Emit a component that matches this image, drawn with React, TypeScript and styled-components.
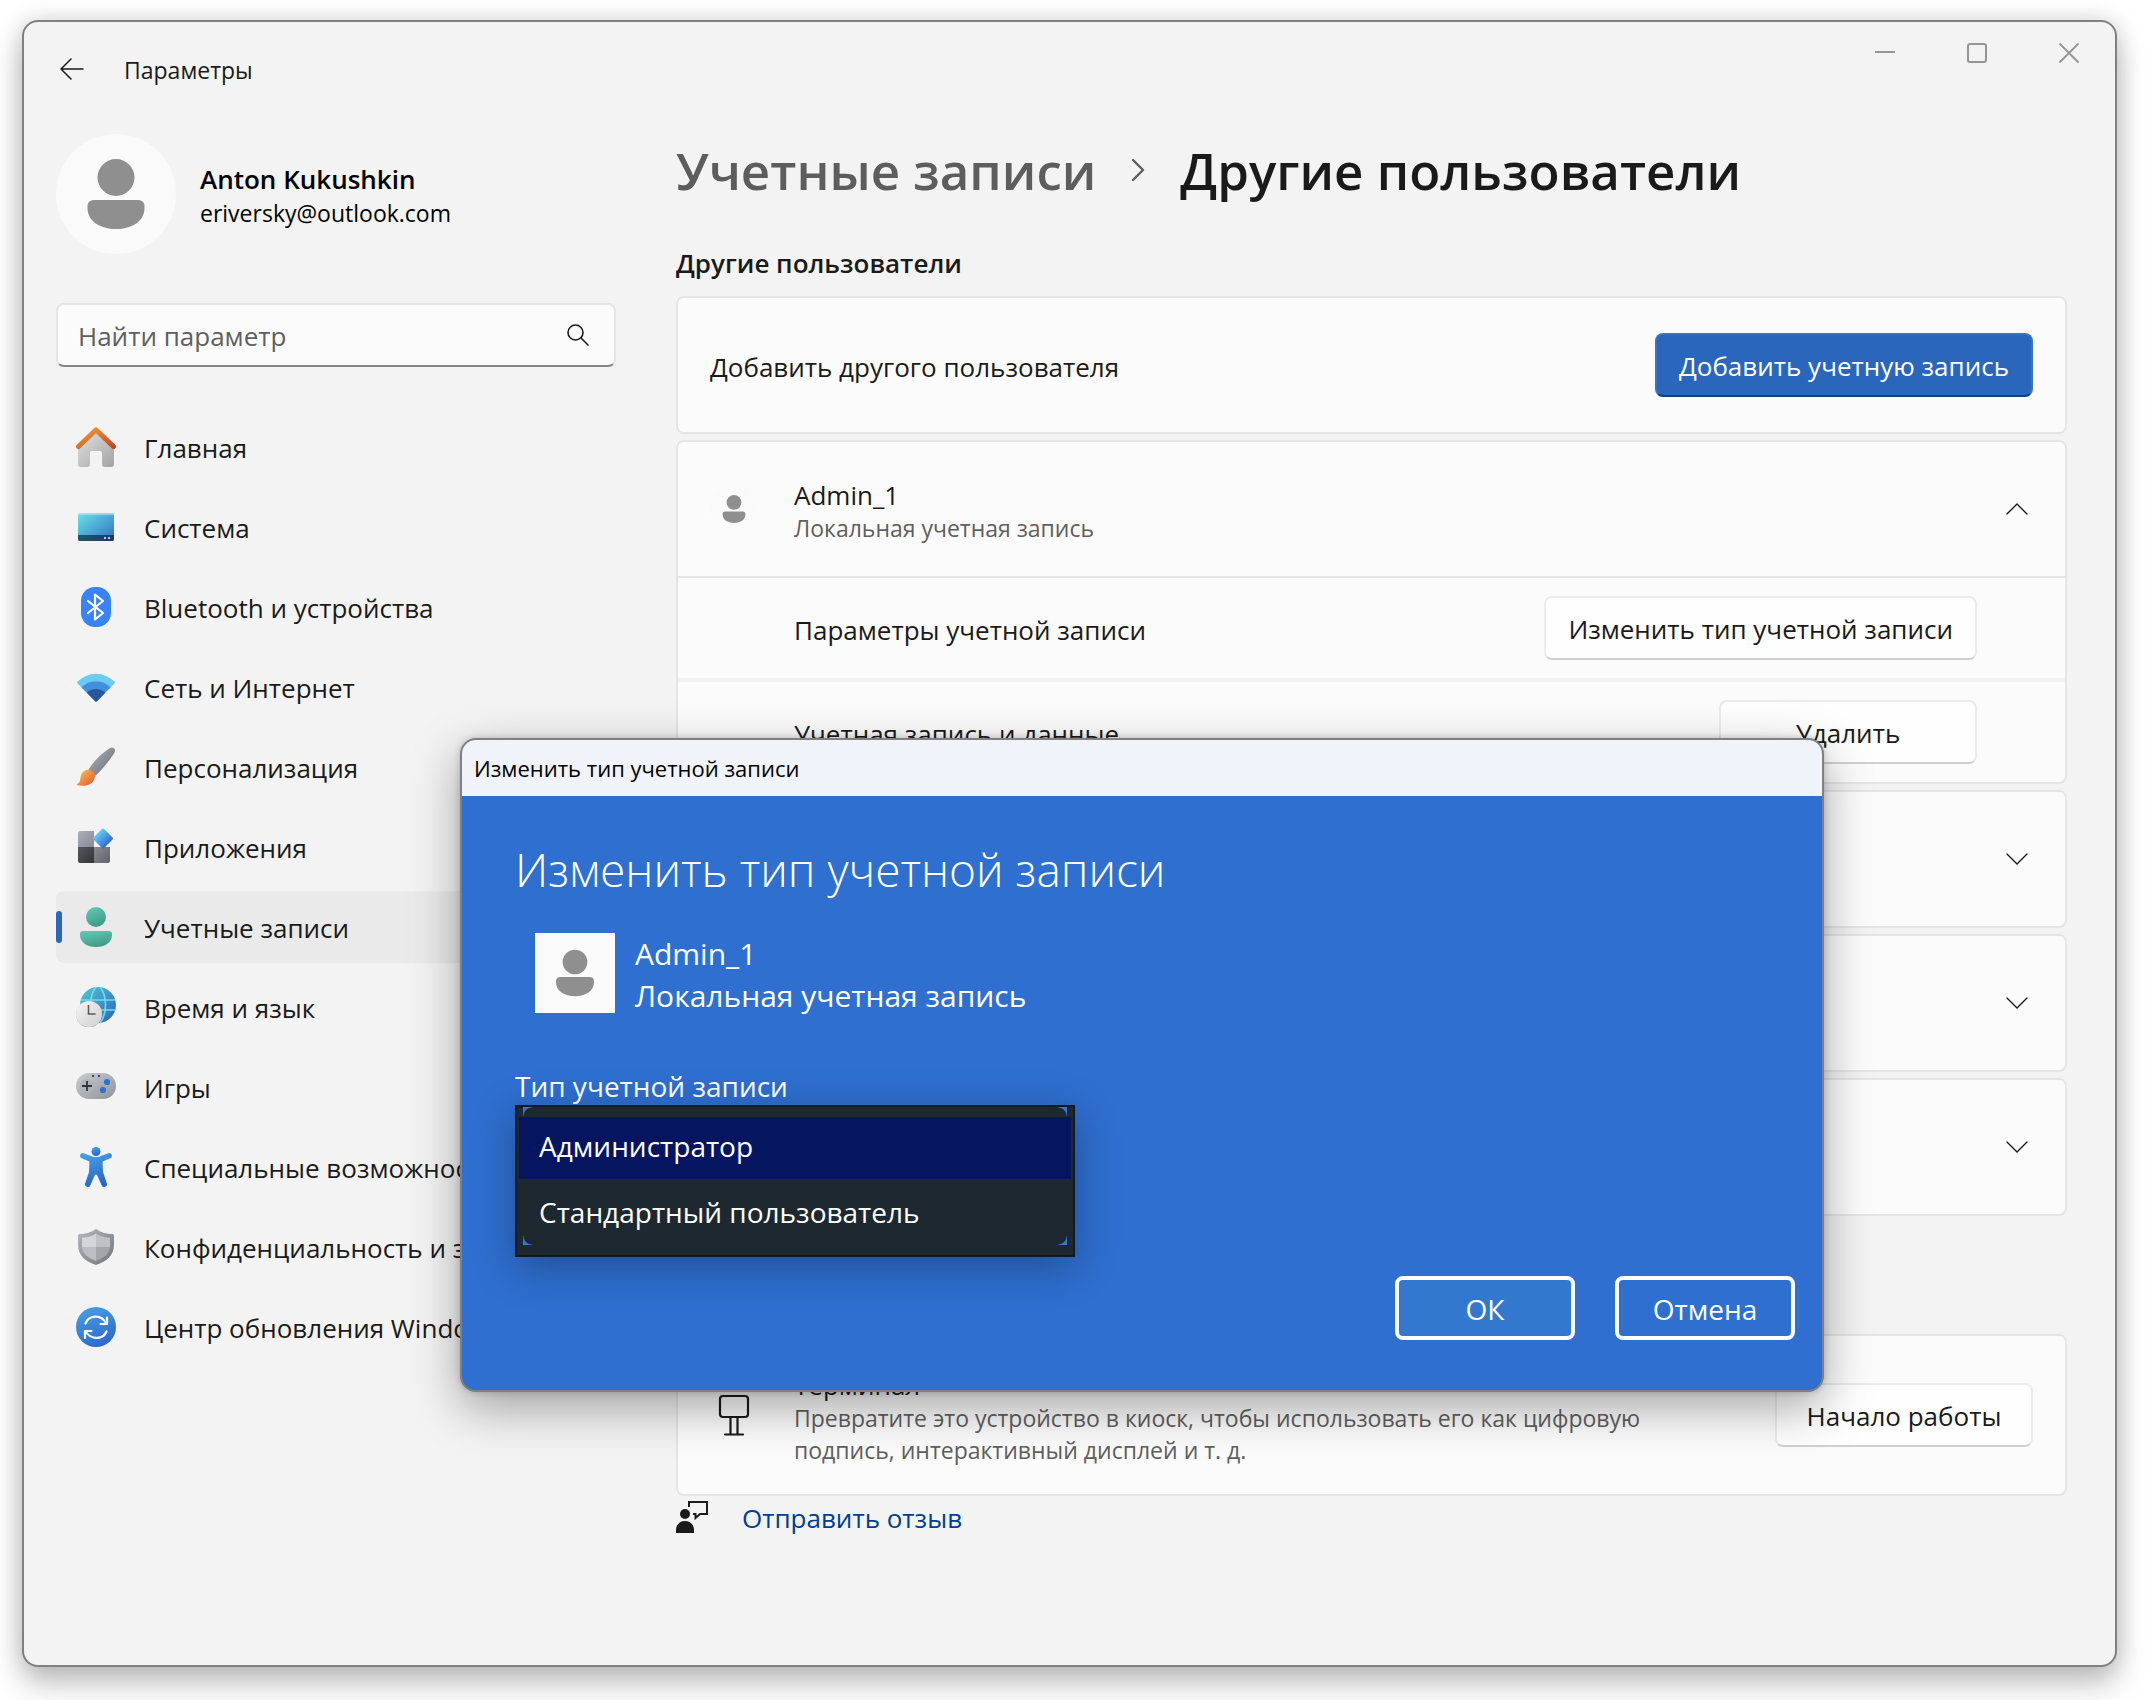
import React from "react";
import styled, { createGlobalStyle } from "styled-components";

const GlobalStyle = createGlobalStyle`
  *, *::before, *::after { box-sizing: border-box; }
  body {
    margin: 0;
    background: #fff;
    color: #1a1a1a;
    font-family: "Open Sans", "Noto Sans", sans-serif;
    font-size: 26px;
  }
  button, input, select { font: inherit; color: inherit; margin: 0; }
  h1, h2, h3, p { margin: 0; }
  svg { display: block; flex: none; }
`;

/* ---------- Window shell ---------- */

const Desktop = styled.div`
  display: flex;
  min-height: 100vh;
  padding: 20px 35px 33px 22px;
`;

const SettingsWindow = styled.div`
  position: relative;
  flex: 1;
  min-width: 0;
  display: flex;
  flex-direction: column;
  background: #f3f3f3;
  border: 2px solid #808080;
  border-radius: 16px;
  box-shadow: 0 0 24px rgba(0, 0, 0, 0.16), 0 18px 30px rgba(0, 0, 0, 0.22);
`;

const TitleBar = styled.header`
  display: flex;
  justify-content: space-between;
  align-items: flex-start;
  height: 96px;
`;

const TitleGroup = styled.div`
  display: flex;
  align-items: center;
  gap: 32px;
  padding: 28px 0 0 28px;
`;

const AppName = styled.span`
  font-size: 23px;
  line-height: 32px;
  padding-top: 2px;
`;

const IconButton = styled.button<{ $w: number; $h: number }>`
  display: flex;
  align-items: center;
  justify-content: center;
  width: ${(p) => p.$w}px;
  height: ${(p) => p.$h}px;
  padding: 0;
  border: 0;
  background: none;
`;

const WindowControls = styled.div`
  display: flex;
  color: #959595;
`;

const Columns = styled.div`
  display: flex;
  gap: 60px;
  padding: 16px 48px 40px 32px;
`;

/* ---------- Sidebar ---------- */

const Sidebar = styled.aside`
  flex: 0 0 560px;
`;

const Profile = styled.div`
  display: flex;
  align-items: center;
  gap: 24px;
`;

const ProfileText = styled.div`
  padding-top: 4px;
  color: #000;
`;

const AvatarBox = styled.div<{ $size: number; $square?: boolean }>`
  flex: none;
  width: ${(p) => p.$size}px;
  height: ${(p) => p.$size}px;
  border-radius: ${(p) => (p.$square ? "0" : "50%")};
  background: #fafafa;
  overflow: hidden;
`;

const ProfileName = styled.div`
  font-weight: 600;
  line-height: 34px;
`;

const ProfileMail = styled.div`
  font-size: 23px;
  line-height: 34px;
`;

const SearchBox = styled.label`
  display: flex;
  align-items: center;
  height: 64px;
  margin: 49px 0 44px;
  padding: 0 24px 0 20px;
  background: #fbfbfb;
  border: 2px solid #e5e5e5;
  border-bottom-color: #868686;
  border-radius: 8px;
`;

const SearchInput = styled.input`
  flex: 1;
  min-width: 0;
  padding: 2px 0 0;
  border: 0;
  outline: 0;
  background: none;
  &::placeholder { color: #606060; opacity: 1; }
`;

const NavList = styled.nav`
  display: flex;
  flex-direction: column;
  gap: 8px;
`;

const NavLink = styled.a<{ $active?: boolean }>`
  position: relative;
  display: flex;
  align-items: center;
  gap: 28px;
  height: 72px;
  padding-left: 20px;
  border-radius: 8px;
  background: ${(p) => (p.$active ? "#eaeaea" : "transparent")};
  color: inherit;
  text-decoration: none;
  white-space: nowrap;

  &::before {
    content: "";
    display: ${(p) => (p.$active ? "block" : "none")};
    position: absolute;
    left: 0;
    top: 20px;
    width: 6px;
    height: 32px;
    border-radius: 3px;
    background: #2a66bb;
  }
`;

const NavLabel = styled.span`
  padding-top: 2px;
`;

/* ---------- Main column ---------- */

const Main = styled.main`
  flex: 1;
  min-width: 0;
`;

const Breadcrumb = styled.h1`
  display: flex;
  align-items: center;
  gap: 35px;
  margin-bottom: 35px;
  font-size: 51px;
  line-height: 72px;
  font-weight: 600;
  white-space: nowrap;
`;

const CrumbLink = styled.a`
  color: #5d5d5d;
  text-decoration: none;
`;

const SectionTitle = styled.h2`
  margin-bottom: 11px;
  font-size: 26px;
  line-height: 44px;
  font-weight: 600;
`;

const CardStack = styled.div`
  display: flex;
  flex-direction: column;
  gap: 6px;
`;

const Card = styled.section`
  background: #fbfbfb;
  border: 2px solid #e5e5e5;
  border-radius: 8px;
`;

const KioskSection = styled.div`
  margin-top: 118px;
`;

const CardHead = styled.div<{ $minHeight?: number }>`
  display: flex;
  align-items: center;
  gap: 36px;
  min-height: ${(p) => p.$minHeight ?? 134}px;
  padding: 0 32px;
`;

const CardText = styled.div`
  flex: 1;
  min-width: 0;
  padding-top: 4px;
`;

const CardTitle = styled.h3`
  font-size: 26px;
  line-height: 34px;
  font-weight: 400;
`;

const CardNote = styled.p`
  max-width: 900px;
  font-size: 23px;
  line-height: 32px;
  color: #5f5f5f;
`;

const IconSlot = styled.div`
  display: flex;
  justify-content: center;
  width: 48px;
`;

const DetailRow = styled.div<{ $first?: boolean }>`
  display: flex;
  align-items: center;
  justify-content: space-between;
  height: ${(p) => (p.$first ? 102 : 104)}px;
  padding: 0 88px 0 116px;
  border-top: ${(p) => (p.$first ? "2px solid #e5e5e5" : "4px solid #f3f3f3")};
`;

const RowLabel = styled.span`
  padding-top: 3px;
`;

const Button = styled.button<{ $accent?: boolean }>`
  min-width: 258px;
  height: 64px;
  padding: 2px 22px 0;
  border: 2px solid ${(p) => (p.$accent ? "#3a73c2" : "#ebebeb")};
  border-bottom-color: ${(p) => (p.$accent ? "#163f78" : "#d0d0d0")};
  border-radius: 8px;
  background: ${(p) => (p.$accent ? "#2a66bb" : "#fefefe")};
  color: ${(p) => (p.$accent ? "#fff" : "#1a1a1a")};
  white-space: nowrap;
`;

const Feedback = styled.a`
  display: flex;
  align-items: center;
  gap: 34px;
  height: 42px;
  color: #003e92;
  text-decoration: none;
`;

/* ---------- Dialog ---------- */

const Dialog = styled.div`
  position: absolute;
  left: 436px;
  right: 291px;
  top: 716px;
  overflow: hidden;
  border: 2px solid #808080;
  border-radius: 16px;
  background: #2f6fd0;
  color: #fff;
  box-shadow: 0 0 6px rgba(0, 0, 0, 0.2), 0 16px 48px rgba(0, 0, 0, 0.34);
`;

const DialogBar = styled.div`
  height: 56px;
  padding: 0 12px;
  background: #f0f3f9;
  color: #000;
  font-size: 22px;
  line-height: 56px;
`;

const DialogBody = styled.div`
  padding: 43px 27px 50px 53px;
`;

const DialogTitle = styled.h2`
  font-size: 46px;
  line-height: 60px;
  font-weight: 300;
`;

const Account = styled.div`
  display: flex;
  gap: 20px;
  margin: 34px 0 50px 20px;
  font-size: 30px;
  line-height: 42px;
`;

const FieldLabel = styled.label`
  display: block;
  font-size: 28px;
  line-height: 38px;
`;

const ListFrame = styled.div`
  position: relative;
  width: 560px;
  height: 152px;
  box-shadow: 0 10px 40px rgba(0, 0, 0, 0.3);

  /* rounded inner frame whose corners show through the list */
  &::after {
    content: "";
    position: absolute;
    inset: 2px 8px 12px;
    pointer-events: none;
    background:
      radial-gradient(circle at 100% 100%, transparent 8px, #3a76d2 9px) 0 0 / 9px 9px no-repeat,
      radial-gradient(circle at 0 100%, transparent 8px, #3a76d2 9px) 100% 0 / 9px 9px no-repeat,
      radial-gradient(circle at 100% 0, transparent 8px, #3a76d2 9px) 0 100% / 9px 9px no-repeat,
      radial-gradient(circle at 0 0, transparent 8px, #3a76d2 9px) 100% 100% / 9px 9px no-repeat;
  }
`;

const TypeList = styled.select`
  display: block;
  width: 100%;
  height: 100%;
  padding: 10px 2px;
  border: 2px solid #121b22;
  border-radius: 0;
  outline: 0;
  overflow: hidden;
  appearance: none;
  background: #1e2831;
  color: #fff;
  font-size: 28px;

  option {
    height: 62px;
    min-height: 62px;
    padding: 10px 20px 0;
    color: #fff;
  }
  option + option { margin-top: 4px; }
  option:checked {
    background: linear-gradient(#051560, #051560);
    color: #fff;
  }
`;

const DialogActions = styled.div`
  display: flex;
  justify-content: flex-end;
  gap: 40px;
  margin-top: 19px;
`;

const DialogButton = styled.button<{ $primary?: boolean }>`
  width: 180px;
  height: 64px;
  padding: 2px 0 0;
  border: 4px solid #fff;
  border-radius: 8px;
  background: ${(p) => (p.$primary ? "#3378cf" : "transparent")};
  color: #fff;
  font-size: 28px;
  line-height: 38px;
`;

/* ---------- Icons ---------- */

const Person = ({ size }: { size: number }) => (
  <svg width={size} height={size} viewBox="0 0 120 120" aria-hidden="true">
    <circle cx="60" cy="43.5" r="18.5" fill="#8f8f8f" />
    <path d="M38 66H82Q88.500 66 88.500 72.500V74C88.500 87 76 95 60 95S31.500 87 31.500 74V72.500Q31.500 66 38 66Z" fill="#8f8f8f" />
  </svg>
);

const Grad = ({ id, from, to, x2 = 1, y2 = 1 }: { id: string; from: string; to: string; x2?: number; y2?: number }) => (
  <linearGradient id={id} x1="0" y1="0" x2={x2} y2={y2}>
    <stop offset="0" stopColor={from} />
    <stop offset="1" stopColor={to} />
  </linearGradient>
);

const NavSvg = ({ children }: { children: React.ReactNode }) => (
  <svg width="40" height="40" viewBox="0 0 40 40" fill="none" aria-hidden="true">{children}</svg>
);

const HomeIcon = () => (
  <NavSvg>
    <defs>
      <Grad id="hb" from="#e2e2e2" to="#a3a3a3" />
      <Grad id="hr" from="#f0a03c" to="#c2481f" />
    </defs>
    <path d="M2 20L20 4L38 20V37A3 3 0 0 1 35 40H29A3 3 0 0 1 26 37V26A2 2 0 0 0 24 24H16A2 2 0 0 0 14 26V37A3 3 0 0 1 11 40H5A3 3 0 0 1 2 37Z" fill="url(#hb)" />
    <path d="M2.500 19.500L20 2.800L37.500 19.500" stroke="url(#hr)" strokeWidth="5" strokeLinecap="round" strokeLinejoin="round" />
  </NavSvg>
);

const SystemIcon = () => (
  <NavSvg>
    <defs>
      <Grad id="sy" from="#68e3e4" to="#2f6fc4" />
      <Grad id="st" from="#245368" to="#1d3a6a" x2={1} y2={0} />
    </defs>
    <rect x="2" y="6" width="36" height="28" rx="2" fill="url(#sy)" />
    <path d="M2 8A2 2 0 0 1 4 6H36A2 2 0 0 1 38 8Z" fill="#b5f0f0" opacity=".6" />
    <path d="M2 28H38V32A2 2 0 0 1 36 34H4A2 2 0 0 1 2 32Z" fill="url(#st)" />
    <path d="M28 30H30V32H28ZM32 30H34V32H32Z" fill="#b9c8da" />
  </NavSvg>
);

const BluetoothIcon = () => (
  <NavSvg>
    <rect x="5" y="0" width="30" height="40" rx="14" fill="#3a82f7" />
    <path d="M12 14L27 26L19 32.500V7.500L27 14L12 26" stroke="#fff" strokeWidth="2.200" strokeLinecap="round" strokeLinejoin="round" />
  </NavSvg>
);

const WifiIcon = () => (
  <NavSvg>
    <path d="M20 35L1.500 16.500Q.6 15.500 1.500 14.600A26 26 0 0 1 38.500 14.600Q39.400 15.500 38.500 16.500Z" fill="#6bcbf2" />
    <path d="M20 35L5.500 20.200A20.500 20.500 0 0 1 34.500 20.200Z" fill="#428fdb" />
    <path d="M20 35L10.800 25.700A13.500 13.500 0 0 1 29.200 25.700L21 34.200Q20 35 19 34.200Z" fill="#27559f" />
  </NavSvg>
);

const BrushIcon = () => (
  <NavSvg>
    <defs>
      <Grad id="bh" from="#b2b8be" to="#62686e" />
      <Grad id="bt" from="#f7c65a" to="#e0582a" />
    </defs>
    <path d="M12.500 22.500C17 15 26 6 33.500 1.200Q36.500-.5 38.500 1.800Q39.700 4 38 6.500C33 14 26 23 19 29Z" fill="url(#bh)" />
    <path d="M12 22.800C15.500 23.200 18.800 25.700 19 29C18.700 35.500 13 38.500 8 38.700Q3.500 39 .8 38Q.6 37 2.500 36C5 34.500 3.800 30 5.500 27Q8 23 12 22.800Z" fill="url(#bt)" />
  </NavSvg>
);

const AppsIcon = () => (
  <NavSvg>
    <defs>
      <Grad id="a1" from="#a9aeb8" to="#878c95" />
      <Grad id="a2" from="#55585c" to="#333436" />
      <Grad id="a3" from="#878b92" to="#5f6368" />
      <Grad id="a4" from="#66c9f2" to="#2e6fd3" x2={1} y2={0} />
    </defs>
    <path d="M4 4H18V20H2V6A2 2 0 0 1 4 4Z" fill="url(#a1)" />
    <path d="M2 20H18V36H4A2 2 0 0 1 2 34Z" fill="url(#a2)" />
    <path d="M18 20H34V34A2 2 0 0 1 32 36H18Z" fill="url(#a3)" />
    <rect x="19.500" y="4" width="15" height="15" rx="1.500" fill="url(#a4)" transform="rotate(45 27 11.500)" />
  </NavSvg>
);

const AccountsIcon = () => (
  <NavSvg>
    <defs><Grad id="ac" from="#63ccb8" to="#429b8a" x2={0.4} /></defs>
    <circle cx="20" cy="10" r="10" fill="url(#ac)" />
    <path d="M7 24H33Q36 24 36 27V28C36 35.500 29 40 20 40S4 35.500 4 28V27Q4 24 7 24Z" fill="url(#ac)" />
  </NavSvg>
);

const TimeIcon = () => (
  <NavSvg>
    <defs>
      <Grad id="gl" from="#55c9d6" to="#2b62b8" />
      <Grad id="ck" from="#f5f5f5" to="#cfcfd2" />
    </defs>
    <circle cx="22" cy="18" r="18" fill="url(#gl)" />
    <path d="M5 13H39M5 23H39M20 0C16 5 14.500 11 14.500 18M24 0C28 5 29.500 11 29.500 18S28 31 24 36" stroke="#6fdcec" strokeWidth="1.600" />
    <circle cx="13" cy="27.500" r="13" fill="#a9adb3" />
    <circle cx="13" cy="27" r="13" fill="url(#ck)" />
    <path d="M12.500 18V27H19.500" stroke="#5a5a5a" strokeWidth="1.600" />
  </NavSvg>
);

const GamesIcon = () => (
  <NavSvg>
    <defs><Grad id="gm" from="#c8ccd3" to="#8f949c" /></defs>
    <rect x="0" y="6" width="40" height="26" rx="13" fill="url(#gm)" />
    <circle cx="11" cy="19" r="7" fill="#aeb2ba" />
    <path d="M11 14V24M6 19H16" stroke="#333" strokeWidth="1.800" />
    <circle cx="31" cy="15" r="3.100" fill="#2f70d0" />
    <circle cx="27" cy="23" r="3.100" fill="#2f70d0" />
    <path d="M16 8H18V10H16ZM22 8H24V10H22Z" fill="#4a4a4a" />
  </NavSvg>
);

const AccessIcon = () => (
  <NavSvg>
    <defs><Grad id="ax" from="#4aa3e2" to="#2a69ca" x2={0.3} /></defs>
    <circle cx="20" cy="4.500" r="4.500" fill="url(#ax)" />
    <path d="M7.600 6.200L16.500 9.500Q20 10.600 23.500 9.500L32.400 6.200A2.700 2.700 0 0 1 34.400 11.200L27.200 14.200Q26.500 14.500 26.600 15.500L27 25L30.800 36.200A2.700 2.700 0 0 1 25.600 38.300L21.300 28.500Q20 26.500 18.700 28.500L14.400 38.300A2.700 2.700 0 0 1 9.200 36.200L13 25L13.400 15.500Q13.500 14.500 12.800 14.200L5.600 11.200A2.700 2.700 0 0 1 7.600 6.200Z" fill="url(#ax)" />
  </NavSvg>
);

const ShieldIcon = () => (
  <NavSvg>
    <defs><Grad id="sh" from="#b4b8be" to="#70757b" /></defs>
    <path d="M20 2C25 5.500 30 7 36.500 7Q38 7 38 8.500V18C38 28 31 34.500 20 38C9 34.500 2 28 2 18V8.500Q2 7 3.500 7C10 7 15 5.500 20 2Z" fill="url(#sh)" />
    <path d="M20 6.500C16 9 11.500 10.500 6 10.700V20H20Z" fill="#d3d5d8" />
    <path d="M20 6.500C24 9 28.500 10.500 34 10.700V20H20Z" fill="#bfc1c4" />
    <path d="M6 20H20V34C12 31 6.500 27 6 20Z" fill="#bcbec2" />
    <path d="M34 20H20V34C28 31 33.500 27 34 20Z" fill="#a2a5a9" />
  </NavSvg>
);

const UpdateIcon = () => (
  <NavSvg>
    <defs><Grad id="up" from="#4aa3e0" to="#2f6cd0" x2={0.4} /></defs>
    <circle cx="20" cy="20" r="20" fill="url(#up)" />
    <path d="M9.500 16.500C12.500 8.500 24.500 6.500 30 16M31 10.500V17H24.500" stroke="#fff" strokeWidth="2.200" strokeLinecap="round" strokeLinejoin="round" />
    <path d="M30.500 24.500C27.500 32.500 15.500 33.500 10 25M9 31V24H15.500" stroke="#fff" strokeWidth="2.200" strokeLinecap="round" strokeLinejoin="round" />
  </NavSvg>
);

const Chevron = ({ up }: { up?: boolean }) => (
  <svg width="24" height="24" viewBox="0 0 24 24" fill="none" aria-hidden="true">
    <path d={up ? "M2 17L12 7L22 17" : "M2 7L12 17L22 7"} stroke="#1a1a1a" strokeWidth="1.400" strokeLinecap="round" strokeLinejoin="round" />
  </svg>
);

const CrumbArrow = () => (
  <svg width="14" height="24" viewBox="0 0 14 24" fill="none" aria-hidden="true">
    <path d="M2 2L12 12L2 22" stroke="#5d5d5d" strokeWidth="2.400" strokeLinecap="round" strokeLinejoin="round" />
  </svg>
);

const KioskIcon = () => (
  <svg width="32" height="42" viewBox="0 0 32 42" fill="none" stroke="#1a1a1a" strokeWidth="2.200" aria-hidden="true">
    <rect x="2" y="2" width="28" height="21" rx="3" />
    <path d="M12.500 23V40M19.500 23V40M7 40.500H25" strokeLinecap="round" />
  </svg>
);

const FeedbackIcon = () => (
  <svg width="32" height="32" viewBox="0 0 32 32" fill="none" aria-hidden="true">
    <circle cx="9" cy="13" r="5" fill="#1a1a1a" />
    <path d="M0 32V29C0 23.500 4 20 9 20S18 23.500 18 29V32Z" fill="#1a1a1a" />
    <path d="M13 6V1H31V13H24L19.500 17V13H17" stroke="#1a1a1a" strokeWidth="2" />
  </svg>
);

/* ---------- Data ---------- */

const navItems = [
  { label: "Главная", Icon: HomeIcon },
  { label: "Система", Icon: SystemIcon },
  { label: "Bluetooth и устройства", Icon: BluetoothIcon },
  { label: "Сеть и Интернет", Icon: WifiIcon },
  { label: "Персонализация", Icon: BrushIcon },
  { label: "Приложения", Icon: AppsIcon },
  { label: "Учетные записи", Icon: AccountsIcon, active: true },
  { label: "Время и язык", Icon: TimeIcon },
  { label: "Игры", Icon: GamesIcon },
  { label: "Специальные возможности", Icon: AccessIcon },
  { label: "Конфиденциальность и защита", Icon: ShieldIcon },
  { label: "Центр обновления Windows", Icon: UpdateIcon },
];

const collapsedUsers = [1, 2, 3];

const ChangeTypeDialog = () => (
  <Dialog role="dialog" aria-labelledby="dialog-title">
    <DialogBar>Изменить тип учетной записи</DialogBar>
    <DialogBody>
      <DialogTitle id="dialog-title">Изменить тип учетной записи</DialogTitle>
      <Account>
        <AvatarBox $size={80} $square><Person size={80} /></AvatarBox>
        <div>
          <div>Admin_1</div>
          <div>Локальная учетная запись</div>
        </div>
      </Account>
      <FieldLabel htmlFor="account-type">Тип учетной записи</FieldLabel>
      <ListFrame>
        <TypeList id="account-type" size={2} defaultValue="admin">
          <option value="admin">Администратор</option>
          <option value="standard">Стандартный пользователь</option>
        </TypeList>
      </ListFrame>
      <DialogActions>
        <DialogButton type="button" $primary>ОК</DialogButton>
        <DialogButton type="button">Отмена</DialogButton>
      </DialogActions>
    </DialogBody>
  </Dialog>
);

export default function App() {
  return (
    <Desktop>
      <GlobalStyle />
      <SettingsWindow>
        <TitleBar>
          <TitleGroup>
            <IconButton type="button" aria-label="Назад" $w={40} $h={38}>
              <svg width="24" height="22" viewBox="0 0 24 22" fill="none" stroke="#1a1a1a" strokeWidth="1.500" strokeLinecap="round" strokeLinejoin="round" aria-hidden="true">
                <path d="M11 1L1 11L11 21M1 11H23" />
              </svg>
            </IconButton>
            <AppName>Параметры</AppName>
          </TitleGroup>
          <WindowControls>
            <IconButton type="button" aria-label="Свернуть" $w={92} $h={62}>
              <svg width="20" height="20" viewBox="0 0 20 20" stroke="currentColor" strokeWidth="2" aria-hidden="true"><path d="M0 9H20" /></svg>
            </IconButton>
            <IconButton type="button" aria-label="Развернуть" $w={92} $h={62}>
              <svg width="20" height="20" viewBox="0 0 20 20" fill="none" stroke="currentColor" strokeWidth="2" aria-hidden="true"><rect x="1" y="1" width="18" height="18" rx="2" /></svg>
            </IconButton>
            <IconButton type="button" aria-label="Закрыть" $w={92} $h={62}>
              <svg width="20" height="20" viewBox="0 0 20 20" stroke="currentColor" strokeWidth="1.800" strokeLinecap="round" aria-hidden="true"><path d="M1 1L19 19M19 1L1 19" /></svg>
            </IconButton>
          </WindowControls>
        </TitleBar>

        <Columns>
          <Sidebar>
            <Profile>
              <AvatarBox $size={120}><Person size={120} /></AvatarBox>
              <ProfileText>
                <ProfileName>Anton Kukushkin</ProfileName>
                <ProfileMail>eriversky@outlook.com</ProfileMail>
              </ProfileText>
            </Profile>
            <SearchBox>
              <SearchInput type="text" placeholder="Найти параметр" aria-label="Найти параметр" />
              <svg width="24" height="24" viewBox="0 0 24 24" fill="none" stroke="#1a1a1a" strokeWidth="1.600" strokeLinecap="round" aria-hidden="true">
                <circle cx="9.500" cy="9.500" r="7.500" />
                <path d="M15 15L22 22" />
              </svg>
            </SearchBox>
            <NavList>
              {navItems.map(({ label, Icon, active }) => (
                <NavLink key={label} href="#" $active={active} aria-current={active ? "page" : undefined}>
                  <Icon />
                  <NavLabel>{label}</NavLabel>
                </NavLink>
              ))}
            </NavList>
          </Sidebar>

          <Main>
            <Breadcrumb>
              <CrumbLink href="#">Учетные записи</CrumbLink>
              <CrumbArrow />
              <span>Другие пользователи</span>
            </Breadcrumb>
            <SectionTitle>Другие пользователи</SectionTitle>
            <CardStack>
              <Card>
                <CardHead>
                  <CardText>Добавить другого пользователя</CardText>
                  <Button type="button" $accent>Добавить учетную запись</Button>
                </CardHead>
              </Card>
              <Card>
                <CardHead>
                  <AvatarBox $size={48}><Person size={48} /></AvatarBox>
                  <CardText>
                    <CardTitle>Admin_1</CardTitle>
                    <CardNote>Локальная учетная запись</CardNote>
                  </CardText>
                  <IconButton type="button" aria-label="Свернуть сведения" $w={32} $h={32}><Chevron up /></IconButton>
                </CardHead>
                <DetailRow $first>
                  <RowLabel>Параметры учетной записи</RowLabel>
                  <Button type="button">Изменить тип учетной записи</Button>
                </DetailRow>
                <DetailRow>
                  <RowLabel>Учетная запись и данные</RowLabel>
                  <Button type="button">Удалить</Button>
                </DetailRow>
              </Card>
              {collapsedUsers.map((id) => (
                <Card key={id}>
                  <CardHead>
                    <CardText />
                    <IconButton type="button" aria-label="Развернуть сведения" $w={32} $h={32}><Chevron /></IconButton>
                  </CardHead>
                </Card>
              ))}
            </CardStack>
            <KioskSection>
              <Card>
                <CardHead $minHeight={158}>
                  <IconSlot><KioskIcon /></IconSlot>
                  <CardText>
                    <CardTitle>Терминал</CardTitle>
                    <CardNote>
                      Превратите это устройство в киоск, чтобы использовать его как цифровую подпись, интерактивный дисплей и т. д.
                    </CardNote>
                  </CardText>
                  <Button type="button">Начало работы</Button>
                </CardHead>
              </Card>
            </KioskSection>
            <Feedback href="#">
              <FeedbackIcon />
              <NavLabel>Отправить отзыв</NavLabel>
            </Feedback>
          </Main>
        </Columns>

        <ChangeTypeDialog />
      </SettingsWindow>
    </Desktop>
  );
}
